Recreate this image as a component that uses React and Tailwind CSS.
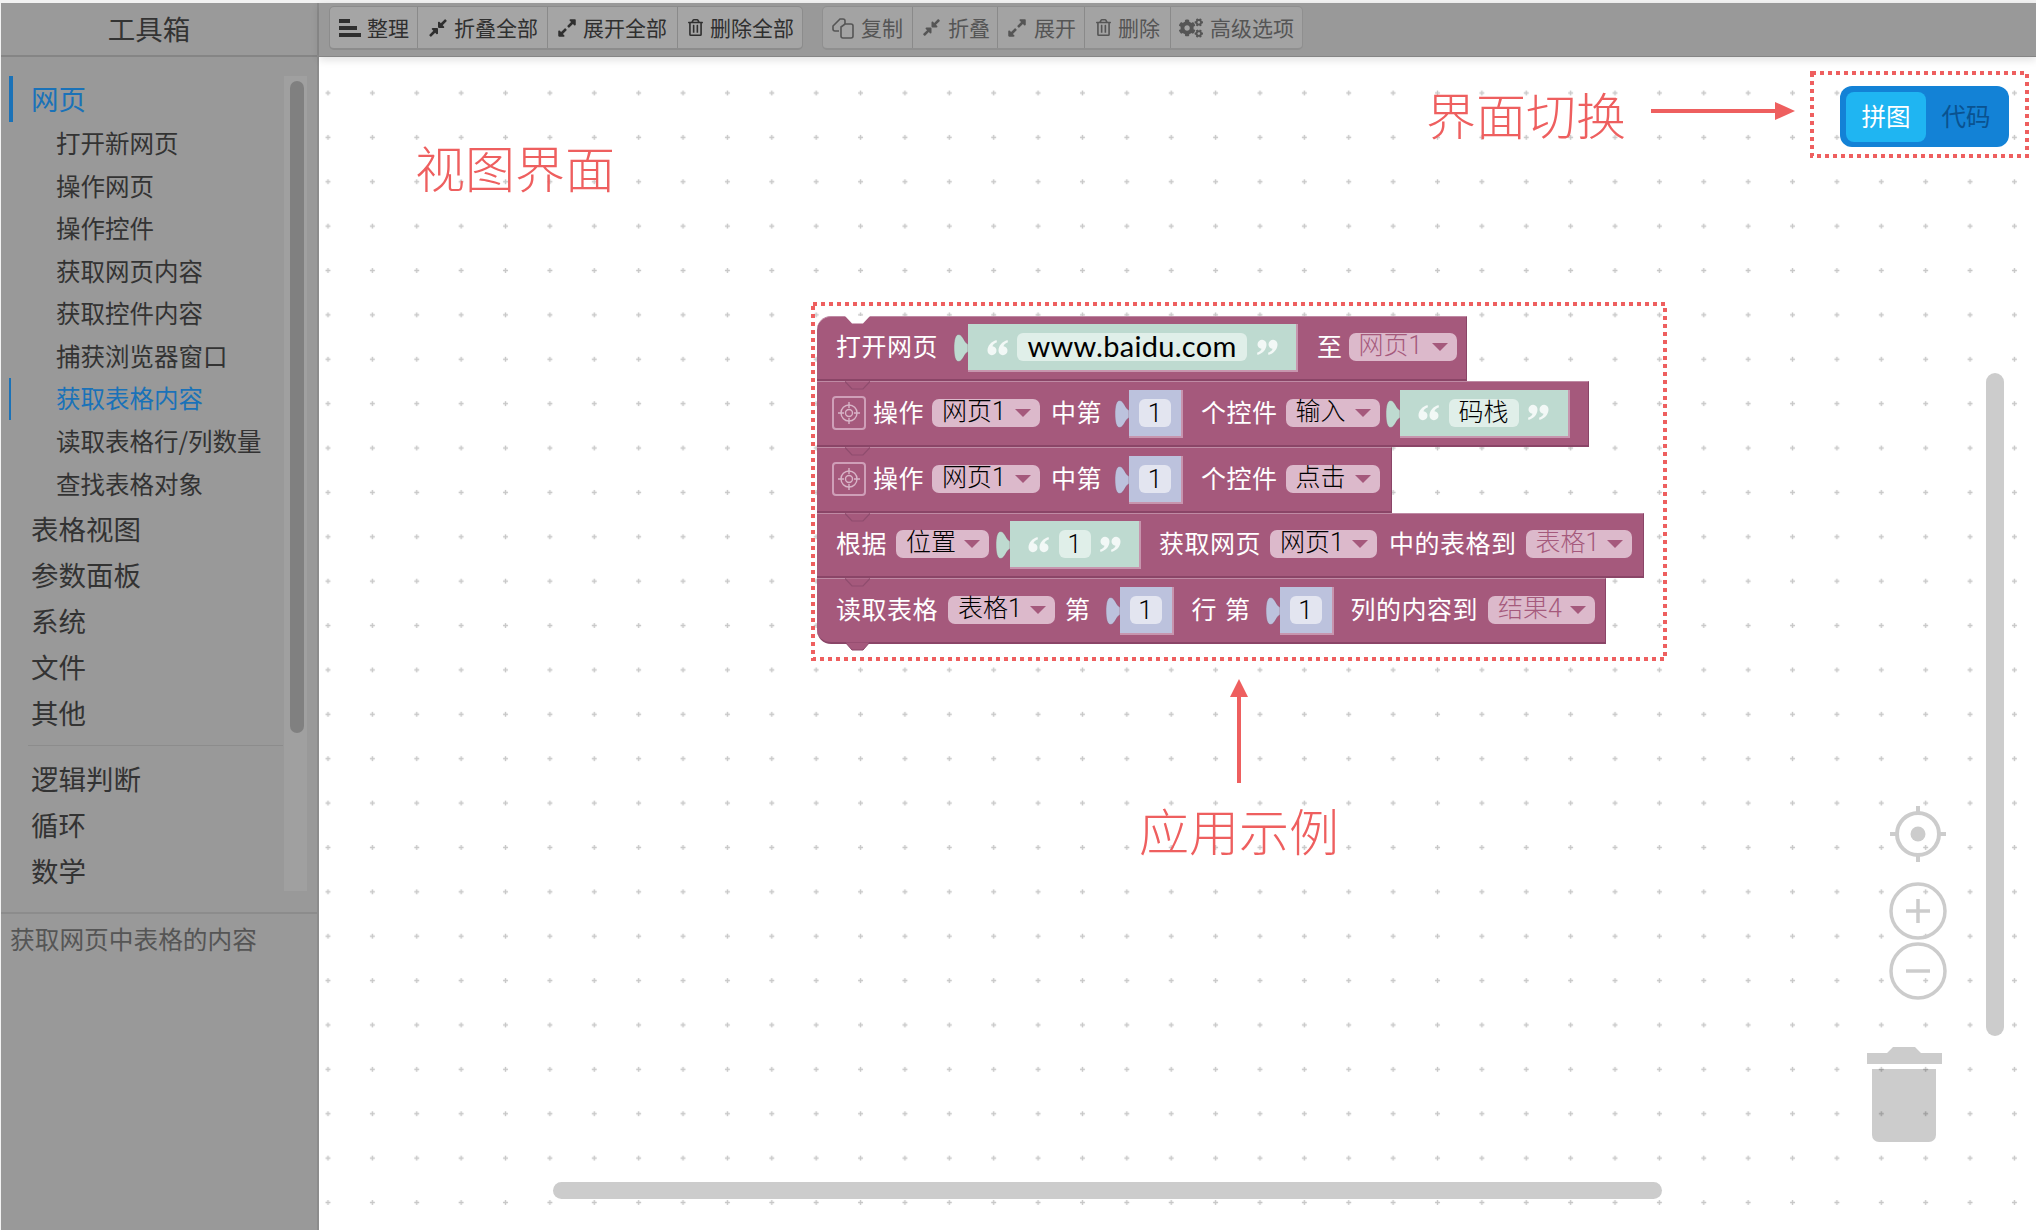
import React from 'react';
import { FaCompressAlt, FaExpandAlt, FaRegTrashAlt, FaCogs } from 'react-icons/fa';

const cjk = "[font-family:'Noto_Sans_CJK_SC',sans-serif]";
const digits = "[font-family:'Roboto','Noto_Sans_CJK_SC',sans-serif]";

const SortIcon = () => (
  <svg width="22" height="18" viewBox="0 0 22 18" fill="currentColor">
    <rect x="0" y="0" width="11" height="4" />
    <rect x="0" y="7" width="18" height="4" />
    <rect x="0" y="14" width="22" height="4" />
  </svg>
);

const CopyIcon = () => (
  <svg width="22" height="22" viewBox="0 0 22 22" fill="none" stroke="currentColor" strokeWidth="1.6">
    <path d="M7 14H3a2 2 0 0 1-2-2V9l7-7h3a2 2 0 0 1 2 2v3" />
    <path d="M9 10l4-3h6a2 2 0 0 1 2 2v10a2 2 0 0 1-2 2H11a2 2 0 0 1-2-2z" />
  </svg>
);

function ToolButton({ icon, label, className }) {
  return (
    <div className={`flex items-center h-full whitespace-nowrap text-[21px] border-r border-[#8a8a8a] last:border-r-0 ${className}`}>
      {icon}
      <span>{label}</span>
    </div>
  );
}

function Toolbar() {
  return (
    <div className="relative z-10 h-[54px] bg-[#999] shadow-[0_3px_8px_rgba(0,0,0,0.12)] border-b border-[#858585] flex items-start pt-[3px] pl-[10px]">
      <div className="flex h-[44px] w-[474px] bg-[#a5a5a5] border border-[#8c8c8c] border-b-2 rounded-[5px] text-[#2f2f2f]">
        <ToolButton className="w-[88px] pl-[9px] gap-[6px]" icon={<SortIcon />} label="整理" />
        <ToolButton className="w-[130px] pl-[10px] gap-[6px]" icon={<FaCompressAlt size={20} />} label="折叠全部" />
        <ToolButton className="w-[130px] pl-[9px] gap-[6px]" icon={<FaExpandAlt size={20} />} label="展开全部" />
        <ToolButton className="flex-1 pl-[9px] gap-[6px]" icon={<FaRegTrashAlt size={17} />} label="删除全部" />
      </div>
      <div className="ml-[19px] flex h-[44px] w-[481px] bg-[#a3a3a3] border border-[#8f8f8f] border-b-2 rounded-[5px] text-[#555]">
        <ToolButton className="w-[90px] pl-[9px] gap-[7px]" icon={<CopyIcon />} label="复制" />
        <ToolButton className="w-[85px] pl-[9px] gap-[7px]" icon={<FaCompressAlt size={19} />} label="折叠" />
        <ToolButton className="w-[87px] pl-[9px] gap-[7px]" icon={<FaExpandAlt size={20} />} label="展开" />
        <ToolButton className="w-[86px] pl-[10px] gap-[6px]" icon={<FaRegTrashAlt size={17} />} label="删除" />
        <ToolButton className="flex-1 pl-[8px] gap-[7px]" icon={<FaCogs size={24} />} label="高级选项" />
      </div>
    </div>
  );
}

function Sidebar() {
  const sub = ['打开新网页', '操作网页', '操作控件', '获取网页内容', '获取控件内容', '捕获浏览器窗口'];
  const top = ['表格视图', '参数面板', '系统', '文件', '其他'];
  const rest = ['逻辑判断', '循环', '数学'];
  return (
    <aside className="w-[318px] shrink-0 bg-[#999] border-r-2 border-[#8c8c8c] flex flex-col text-[#333]">
      <div className="h-[54px] border-b-2 border-[#858585] flex items-center justify-center pr-[20px] text-[27.5px] bg-[#9a9a9a]">
        工具箱
      </div>
      <div className="relative h-[855px] pt-[19px]">
        <div className="ml-[8px] h-[46px] border-l-[4px] border-[#1a72b8] pl-[18px] flex items-center text-[27.5px] text-[#1a72b8]">网页</div>
        {sub.map(s => (
          <div key={s} className="h-[42.6px] pl-[55px] flex items-center text-[24.5px]">{s}</div>
        ))}
        <div className="ml-[8px] h-[42.6px] border-l-[2px] border-[#1a72b8] pl-[45px] flex items-center text-[24.5px] text-[#1a72b8]">获取表格内容</div>
        <div className="h-[42.6px] pl-[55px] flex items-center text-[24.5px]">读取表格行/列数量</div>
        <div className="h-[42.6px] pl-[55px] flex items-center text-[24.5px]">查找表格对象</div>
        {top.map(s => (
          <div key={s} className="h-[46px] pl-[30px] flex items-center text-[27.5px]">{s}</div>
        ))}
        <div className="mt-[10px] mb-[9px] ml-[27px] w-[255px] border-t border-[#8c8c8c]" />
        {rest.map(s => (
          <div key={s} className="h-[46px] pl-[30px] flex items-center text-[27.5px]">{s}</div>
        ))}
        {/* tree scrollbar */}
        <div className="absolute left-[283px] top-[19px] w-[23px] h-[815px] bg-[#a0a0a0]">
          <div className="ml-[6px] mt-[5px] w-[14px] h-[652px] rounded-full bg-[#808080]" />
        </div>
      </div>
      <div className="border-t-2 border-[#8c8c8c] pl-[9px] pt-[6px] text-[24.7px] leading-[37px] text-[#555]">
        获取网页中表格的内容
      </div>
    </aside>
  );
}

const Tab = ({ color }) => (
  <svg width="14" height="30" viewBox="0 0 14 30" className="shrink-0">
    <path d="M14 11C11 11 9 2 5 1.500 1 1 0 8 0 15s1 14 5 13.500c4-.5 6-9.500 9-9.500z" fill={color} stroke="#8a4567" strokeOpacity="0.5" strokeWidth="0.8" />
  </svg>
);

const Quote = ({ close }) => (
  <svg width="21" height="17" viewBox="0 0 21 17" fill="#fff" fillOpacity="0.8" className={close ? 'rotate-180 shrink-0' : 'shrink-0'}>
    <path d="M9.500 1C4 2.500.5 7 .5 11.500a4.500 4.500 0 1 0 5-4.300C5.800 5.500 7.500 4 10 3.200z" />
    <path d="M20.500 1C15 2.500 11.500 7 11.500 11.500a4.500 4.500 0 1 0 5-4.300C16.800 5.500 18.500 4 21 3.200z" />
  </svg>
);

const Label = ({ children, className = '' }) => (
  <span className={`text-white text-[25px] tracking-[0.5px] whitespace-nowrap leading-none pb-[5px] ${className}`}>{children}</span>
);

function Drop({ children, muted, className }) {
  return (
    <div className={`h-[28px] mb-[2px] rounded-[7px] bg-[#dcb9cb] flex items-center justify-between pl-[10px] pr-[9px] shrink-0 ${className}`}>
      <span className={`text-[25px] font-light leading-none whitespace-nowrap pb-[3px] ${digits} ${muted ? 'text-[#a5597c]' : 'text-black'}`}>{children}</span>
      <span className="w-0 h-0 border-x-[8px] border-t-[8px] border-x-transparent border-t-[#a5597c]" />
    </div>
  );
}

function Num({ className }) {
  return (
    <div className={`flex items-center shrink-0 ${className}`}>
      <Tab color="#bcc2dd" />
      <div className="w-[54px] h-[48px] bg-[#bcc2dd] border-r-2 border-b-2 border-[#c795ae] flex items-center justify-center">
        <div className={`w-[32px] h-[28px] rounded-[6px] bg-[#e3e5f0] flex items-center justify-center text-black text-[26px] font-light leading-none ${digits}`}>1</div>
      </div>
    </div>
  );
}

function Str({ children, bodyWidth, fieldWidth, mono, className }) {
  return (
    <div className={`flex items-center shrink-0 ${className}`}>
      <Tab color="#bedad0" />
      <div className={`h-[48px] bg-[#bedad0] border-r-2 border-b-2 border-[#c795ae] flex items-center justify-center gap-[9.5px] ${bodyWidth}`}>
        <Quote />
        <div className={`h-[28px] rounded-[6px] bg-[#e0efe9] flex items-center justify-center text-black leading-none ${fieldWidth} ${mono ? "text-[29px] tracking-[0.3px] pb-[3px] [font-family:'Lato',sans-serif]" : `text-[25px] font-light ${digits}`}`}>
          {children}
        </div>
        <Quote close />
      </div>
    </div>
  );
}

const TargetBox = ({ className }) => (
  <div className={`w-[34px] h-[34px] mb-[2px] rounded-[4px] border-2 border-[#cf9fb8] flex items-center justify-center shrink-0 ${className}`}>
    <svg width="24" height="24" viewBox="0 0 24 24" fill="none" stroke="#d8b4c7" strokeWidth="1.4">
      <circle cx="12" cy="12" r="8" />
      <circle cx="12" cy="12" r="3.5" />
      <path d="M12 1v6M12 17v6M1 12h6M17 12h6" />
    </svg>
  </div>
);

// chevron left between two stacked blocks
const Notch = () => (
  <svg width="25" height="9" viewBox="0 0 25 9" className="absolute left-[28px] -top-[1px]">
    <path d="M0 .5L7 8h11L25 .5" fill="#a5597c" stroke="#8f4d6e" strokeWidth="1.2" />
  </svg>
);

function Row({ children, className, first }) {
  return (
    <div className={`relative flex items-center bg-[#a5597c] border-t border-t-[#bf8aa4] border-b-2 border-b-[#8a4567] border-r border-r-[#8a4567] ${className}`}>
      {first ? (
        <svg width="25" height="8" viewBox="0 0 25 8" className="absolute left-[28px] -top-[1px]">
          <path d="M0 0L7 7.500h11L25 0z" fill="#fff" />
        </svg>
      ) : (
        <Notch />
      )}
      {children}
    </div>
  );
}

function Blocks() {
  return (
    <div className={`absolute left-[498px] top-[259px] flex flex-col items-start ${cjk}`}>
      <Row first className="w-[650px] h-[65px] rounded-tl-[14px]">
        <Label className="ml-[19px]">打开网页</Label>
        <Str className="ml-[16px]" bodyWidth="w-[330px]" fieldWidth="w-[230px]" mono>www.baidu.com</Str>
        <Label className="ml-[19px]">至</Label>
        <Drop muted className="ml-[6px] w-[108px]">网页1</Drop>
      </Row>
      <Row className="w-[772px] h-[66px]">
        <TargetBox className="ml-[15px]" />
        <Label className="ml-[7px]">操作</Label>
        <Drop className="ml-[8px] w-[108px]">网页1</Drop>
        <Label className="ml-[11px]">中第</Label>
        <Num className="ml-[13px]" />
        <Label className="ml-[18px]">个控件</Label>
        <Drop className="ml-[8px] w-[94px]">输入</Drop>
        <Str className="ml-[6px]" bodyWidth="w-[170px]" fieldWidth="w-[70px]">码栈</Str>
      </Row>
      <Row className="w-[575px] h-[66px]">
        <TargetBox className="ml-[15px]" />
        <Label className="ml-[7px]">操作</Label>
        <Drop className="ml-[8px] w-[108px]">网页1</Drop>
        <Label className="ml-[11px]">中第</Label>
        <Num className="ml-[13px]" />
        <Label className="ml-[18px]">个控件</Label>
        <Drop className="ml-[8px] w-[94px]">点击</Drop>
      </Row>
      <Row className="w-[827px] h-[65px]">
        <Label className="ml-[19px]">根据</Label>
        <Drop className="ml-[9px] w-[93px]">位置</Drop>
        <Str className="ml-[7px]" bodyWidth="w-[131px]" fieldWidth="w-[32px]">1</Str>
        <Label className="ml-[18px]">获取网页</Label>
        <Drop className="ml-[9px] w-[107px]">网页1</Drop>
        <Label className="ml-[12px]">中的表格到</Label>
        <Drop muted className="ml-[9px] w-[106px]">表格1</Drop>
      </Row>
      <Row className="w-[789px] h-[66px] rounded-bl-[14px]">
        <Label className="ml-[19px]">读取表格</Label>
        <Drop className="ml-[10px] w-[107px]">表格1</Drop>
        <Label className="ml-[10px]">第</Label>
        <Num className="ml-[15px]" />
        <Label className="ml-[18px]">行</Label>
        <Label className="ml-[8px]">第</Label>
        <Num className="ml-[15px]" />
        <Label className="ml-[17px]">列的内容到</Label>
        <Drop muted className="ml-[10px] w-[107px]">结果4</Drop>
        <svg width="25" height="9" viewBox="0 0 25 9" className="absolute left-[28px] top-full">
          <path d="M0 0L7 8h11L25 0z" fill="#a5597c" stroke="#8a4567" strokeWidth="1" />
        </svg>
      </Row>
    </div>
  );
}

const Note = ({ children, className }) => (
  <div className={`absolute text-[50px] leading-none font-light text-[#ee5f5f] whitespace-nowrap ${cjk} ${className}`}>{children}</div>
);

function Canvas() {
  return (
    <div className="relative flex-1 bg-white overflow-hidden">
      {/* workspace grid */}
      <svg className="absolute inset-0 w-full h-full">
        <defs>
          <pattern id="grid" patternUnits="userSpaceOnUse" width="44.38" height="44.38" x="-13.2" y="13.8">
            <path d="M22.200 19.700v5M19.700 22.200h5" stroke="#c8c8c8" strokeWidth="1.4" />
          </pattern>
        </defs>
        <rect width="100%" height="100%" fill="url(#grid)" />
      </svg>

      <Note className="left-[96px] top-[84px]">视图界面</Note>
      <Note className="left-[1107px] top-[31px]">界面切换</Note>
      <Note className="left-[820px] top-[747px]">应用示例</Note>

      <Blocks />

      {/* dotted frames and arrows */}
      <svg className="absolute inset-0 w-full h-full pointer-events-none" fill="none">
        <rect x="494" y="247" width="852" height="355" stroke="#ee5f5f" strokeWidth="4" strokeDasharray="4 4" />
        <rect x="1493" y="16" width="215" height="83" stroke="#ee5f5f" strokeWidth="4" strokeDasharray="4 4" />
        <path d="M1332 54h125" stroke="#ee5f5f" strokeWidth="4" />
        <path d="M1456 45l20 9-20 9z" fill="#ee5f5f" />
        <path d="M920 726V636" stroke="#ee5f5f" strokeWidth="4" />
        <path d="M911 640l9-18 9 18z" fill="#ee5f5f" />
      </svg>

      {/* view switch */}
      <div className={`absolute left-[1521px] top-[29px] w-[169px] h-[61px] rounded-[12px] bg-[#1382d6] flex items-center pl-[6px] ${cjk}`}>
        <div className="w-[80px] h-[50px] rounded-[8px] bg-[#1fb5f2] flex items-center justify-center text-[24.5px] text-white">拼图</div>
        <div className="flex-1 flex items-center justify-center pr-[3px] text-[24.5px] text-[#0a5290]">代码</div>
      </div>

      {/* zoom controls and trash */}
      <svg className="absolute left-[1541px] top-[743px]" width="90" height="350" viewBox="0 0 90 350" fill="none">
        <circle cx="58" cy="34" r="21" stroke="#ccc" strokeWidth="4" />
        <circle cx="58" cy="34" r="7.500" fill="#ccc" />
        <path d="M58 6v8M58 54v8M30 34h8M78 34h8" stroke="#ccc" strokeWidth="4" />
        <circle cx="58" cy="111" r="27" stroke="#ccc" strokeWidth="3.500" />
        <path d="M46 111h24M58 99v24" stroke="#ccc" strokeWidth="3.500" />
        <circle cx="58" cy="171" r="27" stroke="#ccc" strokeWidth="3.500" />
        <path d="M46 171h24" stroke="#ccc" strokeWidth="3.500" />
        <path d="M7 253h20l6-6h22l6 6h21v11H7z" fill="#000" fillOpacity="0.2" />
        <path d="M12 269h64v66a7 7 0 0 1-7 7H19a7 7 0 0 1-7-7z" fill="#000" fillOpacity="0.2" />
      </svg>

      {/* workspace scrollbars */}
      <div className="absolute left-[1667px] top-[316px] w-[18px] h-[663px] rounded-full bg-[#ccc]" />
      <div className="absolute left-[234px] top-[1125px] w-[1109px] h-[17px] rounded-full bg-[#ccc]" />
    </div>
  );
}

export default function App() {
  return (
    <div className={`w-[2036px] h-[1230px] pt-[3px] pl-px bg-[#f2f2f2] flex overflow-hidden ${cjk}`}>
      <Sidebar />
      <main className="flex-1 flex flex-col min-w-0">
        <Toolbar />
        <Canvas />
      </main>
    </div>
  );
}
